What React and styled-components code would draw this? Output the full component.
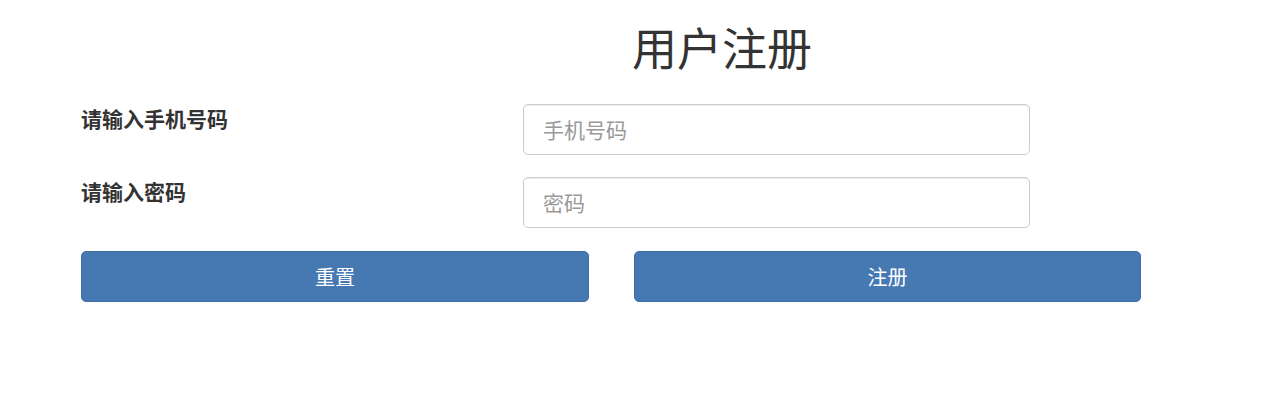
import styled, { createGlobalStyle } from 'styled-components';

const GlobalStyle = createGlobalStyle`
    body {
        margin: 0;
        background: #fff;
        font-family: "Noto Sans CJK SC", "Noto Sans", sans-serif;
        color: #333;
    }
`;

const Page = styled.div`
    width: 1288px;
    height: 403px;
    padding: 0 0 0 81px;
    box-sizing: border-box;
`;

const Title = styled.h1`
    margin: 0;
    padding: 15px 0 0 551px;
    font-size: 45px;
    font-weight: 400;
    line-height: 64px;
    color: #333;
`;

const Form = styled.form`
    display: flex;
    flex-direction: column;
    gap: 22px;
    margin-top: 25px;
`;

const Row = styled.div`
    display: flex;
    align-items: flex-start;
`;

const Label = styled.label`
    width: 442px;
    padding-top: 1px;
    font-size: 21px;
    font-weight: 700;
    line-height: 26px;
    color: #333;
`;

const Input = styled.input`
    width: 507px;
    height: 51px;
    box-sizing: border-box;
    padding: 0 19px 2px;
    border: 1px solid #ccc;
    border-radius: 5px;
    box-shadow: inset 0 1px 1px rgba(0, 0, 0, 0.075);
    font-family: inherit;
    font-size: 21px;
    color: #555;
    outline: none;
    &::placeholder {
        color: #999;
    }
`;

const Buttons = styled.div`
    display: flex;
    gap: 45px;
    margin-top: 1px;
`;

const Button = styled.button`
    width: ${(p) => p.$w}px;
    height: 51px;
    border: 1px solid #3f6ea3;
    border-radius: 5px;
    background-color: #4679b2;
    color: #fff;
    font-family: inherit;
    font-size: 20px;
    cursor: pointer;
`;

function App() {
    return (
        <Page>
            <GlobalStyle />
            <Title>用户注册</Title>
            <Form>
                <Row>
                    <Label>请输入手机号码</Label>
                    <Input placeholder="手机号码" name="phone" />
                </Row>
                <Row>
                    <Label>请输入密码</Label>
                    <Input placeholder="密码" name="password" type="password" />
                </Row>
                <Buttons>
                    <Button type="reset" $w={508}>重置</Button>
                    <Button type="button" $w={507}>注册</Button>
                </Buttons>
            </Form>
        </Page>
    );
}

export default App;
